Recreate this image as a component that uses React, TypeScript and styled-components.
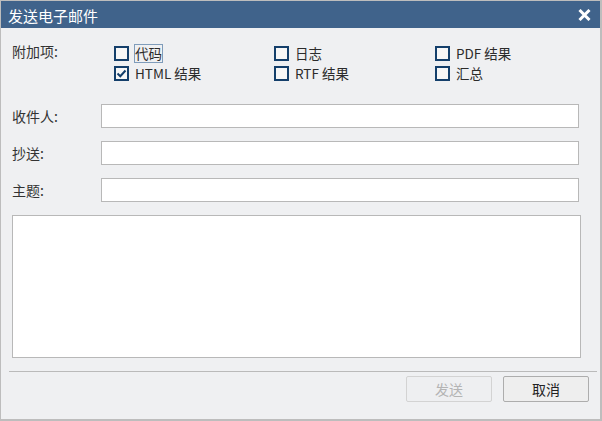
import React from "react";
import styled, { createGlobalStyle } from "styled-components";

const Global = createGlobalStyle`
  html, body { margin: 0; padding: 0; background: #ffffff; }
  body { font-family: "Noto Sans CJK SC", "Noto Sans", sans-serif; }
  * { box-sizing: border-box; }
`;

const Window = styled.div`
  width: 602px;
  height: 421px;
  display: flex;
  flex-direction: column;
  background: #eff0f2;
  border: 2px solid #bdbdbd;
  border-top-width: 1px;
  border-left-width: 1px;
`;

const TitleBar = styled.div`
  height: 27px;
  background: #40638b;
  display: flex;
  align-items: center;
  justify-content: space-between;
  padding: 0 9px 0 7px;
`;

const Title = styled.div`
  color: #ffffff;
  font-size: 15px;
  line-height: 16px;
  padding-top: 3px;
`;

const CloseButton = styled.button`
  border: none;
  background: transparent;
  padding: 0;
  width: 13px;
  height: 12px;
  display: flex;
  margin-top: 1px;
  cursor: pointer;
`;

const Body = styled.div`
  flex: 1;
  display: flex;
  flex-direction: column;
  padding: 15px 0 0 11px;
  color: #333333;
  font-size: 14px;
`;

const AttachRow = styled.div`
  display: flex;
`;

const FieldLabel = styled.div<{ $width: number }>`
  width: ${(p) => p.$width}px;
  flex: none;
  line-height: 16px;
  white-space: nowrap;
`;

const CheckGrid = styled.div`
  display: grid;
  grid-template-columns: 160px 161px 150px;
  grid-auto-rows: 20px;
`;

const CheckItem = styled.label`
  display: flex;
  align-items: center;
  gap: 6px;
  height: 20px;
`;

const Box = styled.span`
  width: 15px;
  height: 15px;
  border: 2px solid #143f6b;
  background: #f7f7f7;
  display: flex;
  align-items: center;
  justify-content: center;
  flex: none;
`;

const CheckText = styled.span<{ $focus?: boolean }>`
  line-height: 17px;
  padding: 0;
  border: 1px solid ${(p) => (p.$focus ? "#7f9cba" : "transparent")};
  margin-left: -1px;
  color: #2b2b2b;
  font-size: 13.5px;
`;

const Fields = styled.div`
  display: flex;
  flex-direction: column;
  gap: 13px;
  margin-top: 21px;
`;

const FieldRow = styled.div`
  display: flex;
  align-items: center;
`;

const TextInput = styled.input`
  width: 478px;
  height: 24px;
  border: 1px solid #b8b8b8;
  background: #ffffff;
  outline: none;
  font: inherit;
  padding: 0 4px;
`;

const MessageArea = styled.textarea`
  width: 569px;
  height: 143px;
  margin-top: 13px;
  border: 1px solid #b8b8b8;
  background: #ffffff;
  resize: none;
  outline: none;
  font: inherit;
`;

const Separator = styled.div`
  margin: 13px 0 0 -3px;
  width: 588px;
  height: 1px;
  background: #bababa;
`;

const ButtonBar = styled.div`
  display: flex;
  justify-content: flex-end;
  gap: 11px;
  padding: 4px 11px 0 0;
`;

const DialogButton = styled.button<{ $disabled?: boolean }>`
  width: 86px;
  height: 26px;
  border: 1px solid ${(p) => (p.$disabled ? "#d3d3d3" : "#adadad")};
  border-radius: 2px;
  background: ${(p) => (p.$disabled ? "#eeeff1" : "#eeeeee")};
  color: ${(p) => (p.$disabled ? "#b4b4b4" : "#222222")};
  font-family: "Noto Sans CJK SC", sans-serif;
  font-size: 14px;
  padding: 0;
`;

const Check = () => (
  <svg width="11" height="11" viewBox="0 0 11 11">
    <path d="M1.5 5.5 L4.3 8.2 L9.5 2.5" fill="none" stroke="#143f6b" strokeWidth="2" />
  </svg>
);

const items = [
  { label: "代码", checked: false, focus: true },
  { label: "日志", checked: false },
  { label: "PDF 结果", checked: false },
  { label: "HTML 结果", checked: true },
  { label: "RTF 结果", checked: false },
  { label: "汇总", checked: false },
];

export default function App() {
  return (
    <>
      <Global />
      <Window>
        <TitleBar>
          <Title>发送电子邮件</Title>
          <CloseButton aria-label="关闭">
            <svg width="13" height="12" viewBox="0 0 13 12">
              <path d="M1.5 1 L11.5 11 M11.5 1 L1.5 11" stroke="#ffffff" strokeWidth="3" />
            </svg>
          </CloseButton>
        </TitleBar>
        <Body>
          <AttachRow>
            <FieldLabel $width={102}>附加项:</FieldLabel>
            <CheckGrid>
              {items.map((it) => (
                <CheckItem key={it.label}>
                  <Box>{it.checked && <Check />}</Box>
                  <CheckText $focus={it.focus}>{it.label}</CheckText>
                </CheckItem>
              ))}
            </CheckGrid>
          </AttachRow>
          <Fields>
            {["收件人:", "抄送:", "主题:"].map((l) => (
              <FieldRow key={l}>
                <FieldLabel $width={89}>{l}</FieldLabel>
                <TextInput />
              </FieldRow>
            ))}
          </Fields>
          <MessageArea />
          <Separator />
          <ButtonBar>
            <DialogButton $disabled disabled>
              发送
            </DialogButton>
            <DialogButton>取消</DialogButton>
          </ButtonBar>
        </Body>
      </Window>
    </>
  );
}
